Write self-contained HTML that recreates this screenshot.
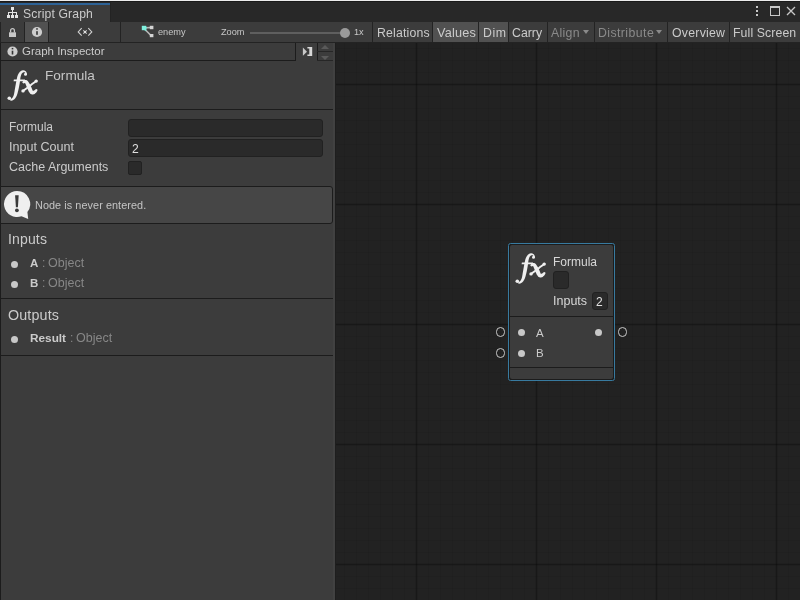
<!DOCTYPE html>
<html><head><meta charset="utf-8">
<style>
*{margin:0;padding:0;box-sizing:border-box}
html,body{width:800px;height:600px;overflow:hidden;background:#282828;font-family:"Liberation Sans",sans-serif;color:#c4c4c4}
.a{position:absolute}
.t{position:absolute;white-space:nowrap;line-height:1;will-change:transform}
</style></head><body>
<svg width="0" height="0" style="position:absolute"><defs><g id="fx"><path d="M20.69 5.49 L20.74 5.11 L20.76 4.72 L20.74 4.34 L20.68 3.98 L20.59 3.65 L20.47 3.33 L20.31 3.03 L20.12 2.76 L19.91 2.52 L19.68 2.31 L19.43 2.12 L19.19 1.91 L18.92 1.73 L18.63 1.59 L18.32 1.48 L18.00 1.40 L17.68 1.35 L17.34 1.32 L17.00 1.33 L16.63 1.37 L16.19 1.47 L15.76 1.60 L15.35 1.78 L14.95 1.99 L14.58 2.24 L14.22 2.52 L13.88 2.83 L13.57 3.16 L13.27 3.52 L13.00 3.90 L12.74 4.30 L12.50 4.72 L12.27 5.16 L12.06 5.61 L11.86 6.08 L11.67 6.57 L11.50 7.07 L11.34 7.59 L11.19 8.12 L11.04 8.69 L10.89 9.45 L10.73 10.19 L10.58 10.94 L10.43 11.71 L10.27 12.48 L10.12 13.27 L9.97 14.07 L9.83 14.87 L9.68 15.68 L9.53 16.49 L9.39 17.30 L9.24 18.12 L9.10 18.93 L8.96 19.74 L8.82 20.54 L8.69 21.34 L8.55 22.13 L8.41 22.90 L8.28 23.67 L8.15 24.41 L8.04 24.95 L7.92 25.46 L7.78 25.95 L7.64 26.41 L7.49 26.84 L7.32 27.24 L7.15 27.61 L6.97 27.96 L6.78 28.28 L6.58 28.57 L6.38 28.84 L6.18 29.07 L5.97 29.29 L5.76 29.48 L5.54 29.64 L5.32 29.78 L5.09 29.91 L4.85 30.01 L4.60 30.10 L4.30 30.20 L4.30 31.60 L4.69 31.70 L5.12 31.71 L5.55 31.68 L5.98 31.59 L6.41 31.46 L6.83 31.29 L7.23 31.07 L7.63 30.82 L8.02 30.53 L8.39 30.20 L8.75 29.84 L9.09 29.45 L9.42 29.02 L9.73 28.56 L10.03 28.07 L10.31 27.55 L10.57 27.01 L10.82 26.43 L11.04 25.82 L11.25 25.19 L11.48 24.41 L11.69 23.64 L11.90 22.85 L12.11 22.06 L12.30 21.25 L12.49 20.44 L12.67 19.63 L12.84 18.80 L13.01 17.98 L13.17 17.16 L13.32 16.34 L13.46 15.52 L13.60 14.70 L13.73 13.90 L13.85 13.10 L13.97 12.31 L14.07 11.53 L14.18 10.76 L14.27 10.01 L14.36 9.31 L14.43 8.84 L14.51 8.37 L14.60 7.92 L14.70 7.48 L14.80 7.07 L14.90 6.68 L15.02 6.31 L15.14 5.96 L15.27 5.63 L15.40 5.33 L15.54 5.05 L15.69 4.79 L15.84 4.55 L16.00 4.34 L16.17 4.15 L16.34 3.97 L16.53 3.81 L16.72 3.67 L16.94 3.54 L17.17 3.43 L17.31 3.37 L17.48 3.32 L17.65 3.28 L17.82 3.26 L17.99 3.25 L18.16 3.25 L18.33 3.26 L18.49 3.28 L18.66 3.30 L18.79 3.39 L18.91 3.50 L19.02 3.62 L19.11 3.76 L19.19 3.91 L19.26 4.08 L19.31 4.27 L19.34 4.49 L19.36 4.73 L19.35 4.99 L19.31 5.31Z"/><path d="M7.9 10.4H19.0V12.3H7.6Z"/><path d="M17.64 14.59 L17.90 14.49 L18.08 14.38 L18.24 14.27 L18.40 14.18 L18.55 14.09 L18.69 14.02 L18.82 13.96 L18.94 13.92 L19.05 13.89 L19.14 13.88 L19.22 13.88 L19.27 13.89 L19.30 13.91 L19.30 13.94 L19.28 13.96 L19.25 13.98 L19.20 13.99 L19.16 13.99 L19.12 14.00 L19.02 13.94 L19.12 14.12 L19.26 14.40 L19.43 14.75 L19.61 15.16 L19.81 15.61 L20.01 16.12 L20.23 16.65 L20.45 17.21 L20.68 17.79 L20.92 18.39 L21.17 18.99 L21.42 19.59 L21.67 20.19 L21.93 20.77 L22.20 21.34 L22.46 21.89 L22.73 22.41 L23.00 22.91 L23.27 23.37 L23.59 23.87 L23.96 24.31 L24.31 24.63 L24.70 24.92 L25.14 25.16 L25.62 25.35 L26.13 25.46 L26.64 25.49 L27.15 25.45 L27.64 25.34 L28.10 25.16 L28.53 24.94 L28.94 24.68 L29.33 24.37 L29.71 24.02 L30.07 23.63 L30.42 23.19 L30.77 22.71 L31.10 22.18 L31.41 21.59 L31.59 20.87 L30.41 19.93 L29.77 20.24 L29.28 20.59 L28.84 20.90 L28.45 21.18 L28.09 21.41 L27.77 21.60 L27.49 21.74 L27.25 21.85 L27.05 21.91 L26.90 21.94 L26.81 21.94 L26.76 21.92 L26.75 21.89 L26.78 21.88 L26.82 21.86 L26.85 21.86 L26.86 21.84 L26.84 21.81 L26.81 21.74 L26.81 21.73 L26.70 21.48 L26.53 21.11 L26.34 20.67 L26.13 20.19 L25.91 19.67 L25.68 19.12 L25.43 18.55 L25.18 17.96 L24.91 17.36 L24.63 16.76 L24.34 16.16 L24.04 15.57 L23.74 14.99 L23.43 14.43 L23.11 13.90 L22.79 13.39 L22.46 12.91 L22.12 12.47 L21.77 12.05 L21.38 11.66 L20.97 11.36 L20.62 11.17 L20.25 11.04 L19.87 10.95 L19.50 10.92 L19.14 10.95 L18.80 11.01 L18.48 11.11 L18.18 11.24 L17.91 11.40 L17.66 11.58 L17.42 11.77 L17.21 11.98 L17.02 12.20 L16.85 12.44 L16.69 12.69 L16.55 12.94 L16.44 13.22 L16.35 13.50 L16.36 13.81Z"/><path d="M30.25 10.83 L29.52 11.34 L28.80 11.87 L28.07 12.40 L27.34 12.94 L26.61 13.48 L25.88 14.03 L25.15 14.58 L24.42 15.14 L23.69 15.69 L22.97 16.25 L22.25 16.80 L21.53 17.36 L20.82 17.91 L20.12 18.46 L19.42 19.01 L18.72 19.55 L18.03 20.08 L17.35 20.61 L16.68 21.13 L16.02 21.65 L17.18 23.15 L17.85 22.64 L18.52 22.11 L19.20 21.58 L19.89 21.05 L20.58 20.51 L21.28 19.96 L21.99 19.41 L22.70 18.86 L23.41 18.31 L24.13 17.75 L24.85 17.20 L25.57 16.65 L26.29 16.10 L27.02 15.55 L27.74 15.00 L28.47 14.47 L29.19 13.93 L29.91 13.41 L30.63 12.89 L31.35 12.37Z"/><circle cx="19.5" cy="5.2" r="1.5"/><circle cx="3.3" cy="29.3" r="1.8"/><circle cx="30.2" cy="12.1" r="1.7"/><circle cx="17.0" cy="21.9" r="1.7"/></g></defs></svg>
<!-- top line -->
<div class="a" style="left:0;top:0;width:800px;height:1px;background:#ececec"></div>
<div class="a" style="left:0;top:1px;width:800px;height:21px;background:#282828"></div>
<div class="a" style="left:0;top:1px;width:800px;height:1px;background:#1a1a1a"></div>
<!-- tab -->
<div class="a" style="left:0;top:3px;width:110px;height:19px;background:#3c3c3c"></div>
<div class="a" style="left:0;top:3px;width:110px;height:2px;background:#2d6296"></div>
<div class="a" style="left:110px;top:2px;width:1px;height:20px;background:#232323"></div>
<svg class="a" style="left:7px;top:7px" width="11" height="11" viewBox="0 0 11 11" shape-rendering="crispEdges">
<g fill="#e4e4e4"><rect x="4" y="0" width="3" height="3"/><rect x="0" y="8" width="3" height="3"/><rect x="4" y="8" width="3" height="3"/><rect x="8" y="8" width="3" height="3"/>
<rect x="5" y="3" width="1" height="5"/><rect x="1" y="5" width="9" height="1"/><rect x="1" y="5" width="1" height="3"/><rect x="9" y="5" width="1" height="3"/></g></svg>
<div class="t" style="left:23px;top:8px;font-size:12.2px;color:#cbcbcb;letter-spacing:0.13px">Script Graph</div>
<!-- window icons -->
<div class="a" style="left:756px;top:6px;width:2px;height:2px;background:#c8c8c8"></div>
<div class="a" style="left:756px;top:10px;width:2px;height:2px;background:#c8c8c8"></div>
<div class="a" style="left:756px;top:14px;width:2px;height:2px;background:#c8c8c8"></div>
<div class="a" style="left:770px;top:6px;width:10px;height:10px;border:1px solid #c8c8c8;border-top-width:2px"></div>
<svg class="a" style="left:786px;top:6px" width="10" height="10" viewBox="0 0 10 10"><path d="M1 1L9 9M9 1L1 9" stroke="#c8c8c8" stroke-width="1.3"/></svg>

<!-- toolbar -->
<div class="a" style="left:0;top:22px;width:800px;height:20px;background:#3c3c3c"></div>
<div class="a" style="left:0;top:42px;width:800px;height:1px;background:#232323"></div>
<div class="a" style="left:0;top:22px;width:1px;height:20px;background:#232323"></div>
<div class="a" style="left:25px;top:22px;width:23px;height:20px;background:#515151"></div>
<div class="a" style="left:24px;top:22px;width:1px;height:20px;background:#232323"></div>
<div class="a" style="left:48px;top:22px;width:1px;height:20px;background:#232323"></div>
<div class="a" style="left:120px;top:22px;width:1px;height:20px;background:#232323"></div>
<div class="a" style="left:372px;top:22px;width:1px;height:20px;background:#232323"></div>
<!-- lock -->
<svg class="a" style="left:0;top:22px" width="24" height="20" viewBox="0 0 24 20">
<path d="M10.6 10.5V8.5a1.9 1.9 0 0 1 3.8 0V10.5" fill="none" stroke="#c8c8c8" stroke-width="1.3"/>
<rect x="9" y="10.3" width="7" height="4.7" fill="#c8c8c8"/></svg>
<!-- info -->
<svg class="a" style="left:25px;top:22px" width="23" height="20" viewBox="0 0 23 20">
<circle cx="12" cy="10" r="5.1" fill="#cdcdcd"/><rect x="11.2" y="6.2" width="1.6" height="1.5" fill="#333"/><rect x="11.2" y="9.2" width="1.6" height="3.6" fill="#333"/></svg>
<!-- <x> -->
<svg class="a" style="left:72px;top:22px" width="26" height="20" viewBox="0 0 26 20">
<g fill="none" stroke="#d0d0d0" stroke-width="1.1"><path d="M9.7 6.2L6.2 10L9.7 13.7"/><path d="M16.3 6.2L19.8 10L16.3 13.7"/>
<path d="M11.3 8.3L14.7 11.7M14.7 8.3L11.3 11.7"/></g><rect x="12" y="9" width="2" height="2" fill="#e0e0e0"/></svg>
<!-- enemy icon -->
<svg class="a" style="left:138px;top:22px" width="20" height="20" viewBox="0 0 20 20">
<path d="M6 5.8L13.5 5.5M6 6.5L13.5 14" stroke="#b4b4b4" stroke-width="1.7" fill="none"/>
<path d="M6 5.8L9 5.7M6 6.5L8.2 8.7" stroke="#7ad8c8" stroke-width="1.7" fill="none"/>
<rect x="3.8" y="3.8" width="4.4" height="4.4" fill="#80f0de"/><rect x="11.8" y="3.8" width="3.6" height="3.4" fill="#d4d4d4"/><rect x="11.8" y="12" width="3.6" height="3.2" fill="#d4d4d4"/></svg>
<div class="t" style="left:158px;top:28px;font-size:9.2px;color:#c8c8c8">enemy</div>
<div class="t" style="left:221px;top:28px;font-size:9.2px;color:#c8c8c8">Zoom</div>
<div class="a" style="left:250px;top:32px;width:95px;height:2px;background:#5f5f5f"></div>
<div class="a" style="left:340px;top:28px;width:10px;height:10px;border-radius:50%;background:#9a9a9a"></div>
<div class="t" style="left:354px;top:28px;font-size:9.2px;color:#c8c8c8">1x</div>
<!-- buttons -->
<div class="a" style="left:433px;top:22px;width:45px;height:20px;background:#515151"></div>
<div class="a" style="left:479px;top:22px;width:29px;height:20px;background:#515151"></div>
<div class="a" style="left:432px;top:22px;width:1px;height:20px;background:#232323"></div>
<div class="a" style="left:478px;top:22px;width:1px;height:20px;background:#232323"></div>
<div class="a" style="left:508px;top:22px;width:1px;height:20px;background:#232323"></div>
<div class="a" style="left:547px;top:22px;width:1px;height:20px;background:#232323"></div>
<div class="a" style="left:594px;top:22px;width:1px;height:20px;background:#232323"></div>
<div class="a" style="left:667px;top:22px;width:1px;height:20px;background:#232323"></div>
<div class="a" style="left:729px;top:22px;width:1px;height:20px;background:#232323"></div>
<div class="t" style="left:377px;top:27px;font-size:12.3px;color:#cbcbcb;letter-spacing:0.17px">Relations</div>
<div class="t" style="left:437px;top:27px;font-size:12.7px;color:#cbcbcb;letter-spacing:0.18px">Values</div>
<div class="t" style="left:483px;top:27px;font-size:12.3px;color:#cbcbcb;letter-spacing:0.6px">Dim</div>
<div class="t" style="left:512px;top:27px;font-size:12.3px;color:#cbcbcb">Carry</div>
<div class="t" style="left:551px;top:27px;font-size:12.3px;color:#8a8a8a;letter-spacing:0.3px">Align</div>
<div class="a" style="left:583px;top:30px;width:0;height:0;border-left:3px solid transparent;border-right:3px solid transparent;border-top:4px solid #8a8a8a"></div>
<div class="t" style="left:597.6px;top:27px;font-size:12.3px;color:#8a8a8a;letter-spacing:0.42px">Distribute</div>
<div class="a" style="left:656px;top:30px;width:0;height:0;border-left:3px solid transparent;border-right:3px solid transparent;border-top:4px solid #8a8a8a"></div>
<div class="t" style="left:672px;top:27px;font-size:12.3px;color:#cbcbcb;letter-spacing:0.25px">Overview</div>
<div class="t" style="left:733px;top:27px;font-size:12.3px;color:#cbcbcb;letter-spacing:0.1px">Full Screen</div>

<!-- panel -->
<div class="a" style="left:0;top:43px;width:335px;height:557px;background:#3c3c3c"></div>
<div class="a" style="left:0;top:43px;width:1px;height:557px;background:#1c1c1c"></div>
<div class="a" style="left:1px;top:60px;width:295px;height:1px;background:#1c1c1c"></div>
<div class="a" style="left:295px;top:43px;width:1px;height:18px;background:#1c1c1c"></div>
<svg class="a" style="left:6.6px;top:45.6px" width="11" height="11" viewBox="0 0 11 11">
<circle cx="5.5" cy="5.5" r="5.1" fill="#cdcdcd"/><rect x="4.7" y="1.9" width="1.6" height="1.5" fill="#333"/><rect x="4.7" y="4.7" width="1.6" height="3.8" fill="#333"/></svg>
<div class="t" style="left:21.5px;top:45.5px;font-size:11.5px;color:#cbcbcb">Graph Inspector</div>
<svg class="a" style="left:296px;top:43px" width="22" height="18" viewBox="0 0 22 18">
<path d="M6.9 4.6L11 8.7L6.9 12.8Z" fill="#c8c8c8"/><path d="M11.4 4H16.2V13.1H11.4V11.6H13.3V5.5H11.4Z" fill="#d8d8d8"/></svg>
<div class="a" style="left:317px;top:43px;width:1px;height:18px;background:#1c1c1c"></div>
<div class="a" style="left:317px;top:51px;width:16px;height:1px;background:#262626"></div>
<div class="a" style="left:317px;top:60px;width:16px;height:1px;background:#262626"></div>
<div class="a" style="left:321px;top:44.5px;width:0;height:0;border-left:4px solid transparent;border-right:4px solid transparent;border-bottom:4px solid #5a5a5a"></div>
<div class="a" style="left:321px;top:55.5px;width:0;height:0;border-left:4px solid transparent;border-right:4px solid transparent;border-top:4px solid #5a5a5a"></div>
<!-- formula header -->
<svg class="a" style="left:5.6px;top:68.8px" width="34" height="34" viewBox="0 0 34 34"><use href="#fx" fill="#efefef"/></svg>
<div class="t" style="left:44.8px;top:68.6px;font-size:13.6px;color:#c6c6c6">Formula</div>
<div class="a" style="left:1px;top:109px;width:333px;height:1px;background:#1c1c1c"></div>
<!-- fields -->
<div class="t" style="left:8.8px;top:120.6px;font-size:12px;color:#cbcbcb">Formula</div>
<div class="t" style="left:8.8px;top:141.3px;font-size:12.6px;color:#cbcbcb">Input Count</div>
<div class="t" style="left:8.8px;top:161px;font-size:12.5px;color:#cbcbcb">Cache Arguments</div>
<div class="a" style="left:128px;top:119px;width:195px;height:18px;background:#2a2a2a;border:1px solid #212121;border-radius:3px"></div>
<div class="a" style="left:128px;top:139px;width:195px;height:18px;background:#2a2a2a;border:1px solid #212121;border-radius:3px"></div>
<div class="t" style="left:131.5px;top:143px;font-size:12.1px;color:#e0e0e0">2</div>
<div class="a" style="left:128px;top:161px;width:14px;height:14px;background:#2a2a2a;border:1px solid #212121;border-radius:2px"></div>

<!-- help box -->
<div class="a" style="left:0;top:186px;width:333px;height:38px;background:#464646;border:1px solid #1c1c1c;border-radius:0 3px 3px 0"></div>
<svg class="a" style="left:0;top:186px" width="36" height="36" viewBox="0 0 36 36">
<path d="M17 5A13 13 0 1 0 21.5 30.2L28.2 33L27.4 26A13 13 0 0 0 17 5Z" fill="#efefef"/>
<path d="M15.1 9.2h3.6l-0.8 12h-2z" fill="#3a3a3a"/><circle cx="16.9" cy="24.3" r="1.9" fill="#3a3a3a"/></svg>
<div class="t" style="left:34.8px;top:200.2px;font-size:10.85px;color:#c4c4c4;letter-spacing:0.07px">Node is never entered.</div>
<!-- inputs -->
<div class="t" style="left:8.2px;top:232.4px;font-size:14px;color:#cbcbcb;letter-spacing:0.15px">Inputs</div>
<div class="a" style="left:11px;top:261.2px;width:7px;height:7px;border-radius:50%;background:#c8c8c8"></div>
<div class="a" style="left:11px;top:281.2px;width:7px;height:7px;border-radius:50%;background:#c8c8c8"></div>
<div class="t" style="left:30px;top:257.7px;font-size:11.5px;font-weight:bold;color:#cbcbcb">A</div><div class="t" style="left:41.5px;top:257.0px;font-size:12px;color:#878787">:</div><div class="t" style="left:47.699999999999996px;top:257.2px;font-size:12.5px;color:#878787">Object</div>
<div class="t" style="left:30px;top:277.5px;font-size:11.5px;font-weight:bold;color:#cbcbcb">B</div><div class="t" style="left:41.5px;top:276.8px;font-size:12px;color:#878787">:</div><div class="t" style="left:47.699999999999996px;top:277.0px;font-size:12.5px;color:#878787">Object</div>
<div class="a" style="left:1px;top:298px;width:333px;height:1px;background:#1c1c1c"></div>
<div class="t" style="left:8px;top:307.5px;font-size:14.3px;color:#cbcbcb;letter-spacing:0.15px">Outputs</div>
<div class="a" style="left:11px;top:336.2px;width:7px;height:7px;border-radius:50%;background:#c8c8c8"></div>
<div class="t" style="left:30px;top:332.5px;font-size:11.8px;font-weight:bold;color:#cbcbcb">Result</div><div class="t" style="left:69.7px;top:331.8px;font-size:12px;color:#878787">:</div><div class="t" style="left:75.9px;top:332.0px;font-size:12.5px;color:#878787">Object</div>
<div class="a" style="left:1px;top:355px;width:333px;height:1px;background:#1c1c1c"></div>
<!-- canvas -->
<div class="a" style="left:335px;top:43px;width:465px;height:557px;background-color:#222222;
background-image:
linear-gradient(to right, rgba(0,0,0,.08) 0, rgba(0,0,0,.08) 1px, rgba(0,0,0,.24) 1px, rgba(0,0,0,.24) 2px, rgba(0,0,0,.08) 2px, rgba(0,0,0,.08) 3px, transparent 3px),
linear-gradient(to bottom, rgba(0,0,0,.08) 0, rgba(0,0,0,.08) 1px, rgba(0,0,0,.24) 1px, rgba(0,0,0,.24) 2px, rgba(0,0,0,.08) 2px, rgba(0,0,0,.08) 3px, transparent 3px),
linear-gradient(to right, rgba(0,0,0,.065) 1px, transparent 1px),
linear-gradient(to bottom, rgba(0,0,0,.065) 1px, transparent 1px);
background-size:120px 557px, 465px 120px, 12px 557px, 465px 12px;
background-position:80px 0, 0 40px, 9px 0, 0 5px;
background-repeat:repeat-x, repeat-y, repeat-x, repeat-y"></div>
<div class="a" style="left:333px;top:43px;width:2px;height:557px;background:#414141"></div>
<div class="a" style="left:335px;top:43px;width:1px;height:557px;background:#1e1e1e"></div>
<!-- node -->
<div class="a" style="left:508px;top:243px;width:107px;height:138px;border:1px solid #387a9f;border-radius:2.5px;background:#1c1c1c"></div>
<div class="a" style="left:510px;top:245px;width:103px;height:71px;background:#3c3c3c;border-radius:2px 2px 0 0"></div>
<div class="a" style="left:510px;top:317px;width:103px;height:50px;background:#3c3c3c"></div>
<div class="a" style="left:510px;top:368px;width:103px;height:11px;background:#3c3c3c;border-radius:0 0 2px 2px"></div>
<svg class="a" style="left:514.3px;top:252.4px" width="34" height="34" viewBox="0 0 34 34"><use href="#fx" fill="#efefef"/></svg>
<div class="t" style="left:553px;top:255.5px;font-size:12px;color:#d8d8d8">Formula</div>
<div class="a" style="left:553px;top:271px;width:16px;height:18px;background:#2a2a2a;border:1px solid #212121;border-radius:3px"></div>
<div class="t" style="left:553px;top:294.7px;font-size:12.5px;color:#d8d8d8">Inputs</div>
<div class="a" style="left:592px;top:292px;width:16px;height:18px;background:#2a2a2a;border:1px solid #212121;border-radius:3px"></div>
<div class="t" style="left:595.5px;top:296.3px;font-size:12px;color:#e0e0e0">2</div>
<div class="a" style="left:518px;top:328.5px;width:7px;height:7px;border-radius:50%;background:#c8c8c8"></div>
<div class="a" style="left:518px;top:349.5px;width:7px;height:7px;border-radius:50%;background:#c8c8c8"></div>
<div class="a" style="left:595px;top:328.5px;width:7px;height:7px;border-radius:50%;background:#c8c8c8"></div>
<div class="a" style="left:495.8px;top:327.3px;width:9.5px;height:9.5px;border-radius:50%;border:1px solid #c8c8c8"></div>
<div class="a" style="left:495.8px;top:348.3px;width:9.5px;height:9.5px;border-radius:50%;border:1px solid #c8c8c8"></div>
<div class="a" style="left:617.8px;top:327.3px;width:9.5px;height:9.5px;border-radius:50%;border:1px solid #c8c8c8"></div>
<div class="t" style="left:536px;top:327.5px;font-size:11.5px;color:#cbcbcb">A</div>
<div class="t" style="left:536px;top:348px;font-size:11.5px;color:#cbcbcb">B</div>

</body></html>
